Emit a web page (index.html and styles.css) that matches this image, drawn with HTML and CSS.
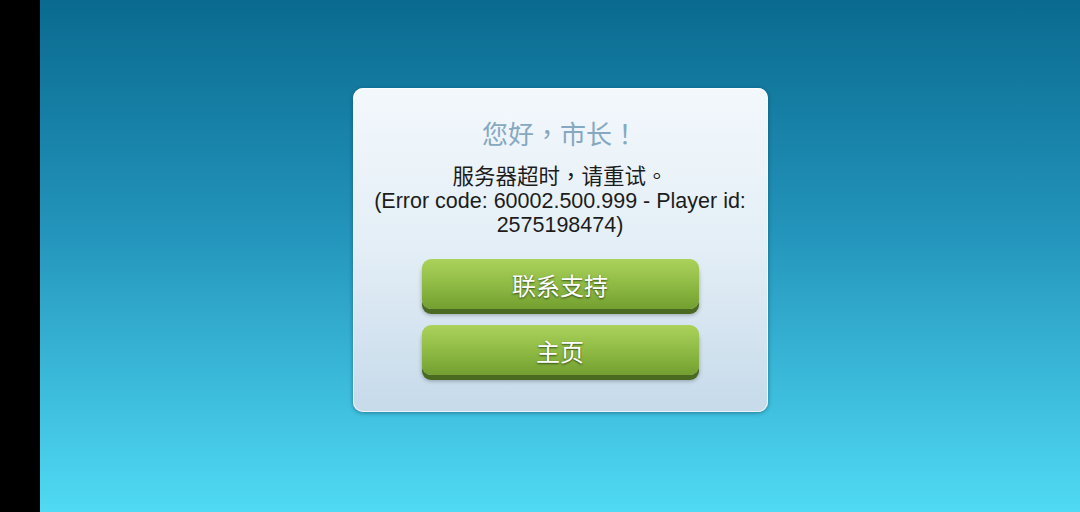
FILE: index.html
```html
<!DOCTYPE html>
<html lang="zh-Hant">
<head>
    <meta charset="UTF-8">
    <meta name="viewport" content="width=device-width, initial-scale=1.0">
    <title>服务器超时</title>
    <link rel="stylesheet" href="styles.css">
</head>
<body>
    <div id="bezel"></div>
    <div id="screen">
        <div class="dialog">
            <div class="dialog-title">您好，市长！</div>
            <div class="dialog-message">
                服务器超时，请重试。<br>
                (Error code: 60002.500.999 - Player id:<br>
                2575198474)
            </div>
            <div class="dialog-buttons">
                <button class="green-button">联系支持</button>
                <button class="green-button">主页</button>
            </div>
        </div>
    </div>
</body>
</html>
```

FILE: styles.css
```css
body {
    margin: 0;
    display: flex;
    width: 1080px;
    height: 512px;
    overflow: hidden;
    font-family: "Liberation Sans", "Noto Sans CJK TC", sans-serif;
}
#bezel {
    width: 40px;
    background-color: #000;
}
#screen {
    flex: 1;
    display: flex;
    justify-content: center;
    align-items: flex-start;
    padding-top: 88px;
    background: linear-gradient(to bottom, #0a6a8f 0%, #2394bb 45%, #50daf4 100%);
}
.dialog {
    box-sizing: border-box;
    width: 415px;
    height: 324px;
    padding: 31px 0 37px;
    border-radius: 10px;
    background: linear-gradient(to bottom, #f3f8fc 0%, #e3eef6 50%, #c6daea 100%);
    box-shadow: inset 0 0 0 1px rgba(255, 255, 255, 0.7), 0 1px 4px rgba(0, 40, 70, 0.45);
    display: flex;
    flex-direction: column;
    align-items: center;
}
.dialog-title {
    font-size: 26px;
    line-height: 32px;
    color: #86a8c1;
}
.dialog-message {
    margin-top: 14px;
    font-size: 21.5px;
    line-height: 24px;
    color: #1c1c1c;
    text-align: center;
}
.dialog-buttons {
    margin-top: 22px;
    display: flex;
    flex-direction: column;
    gap: 16px;
}
.green-button {
    width: 277px;
    height: 50px;
    padding: 0;
    border: none;
    border-radius: 9px;
    font-family: "Liberation Sans", "Noto Sans CJK TC", sans-serif;
    font-size: 24px;
    color: #fff;
    text-shadow: 0 1px 2px rgba(30, 50, 10, 0.8);
    background: linear-gradient(to bottom, #abd25b 0%, #8fbb45 50%, #739f30 100%);
    box-shadow: 0 5px 0 #4a6a22, 0 6px 4px rgba(0, 0, 0, 0.3);
    cursor: pointer;
}
```
